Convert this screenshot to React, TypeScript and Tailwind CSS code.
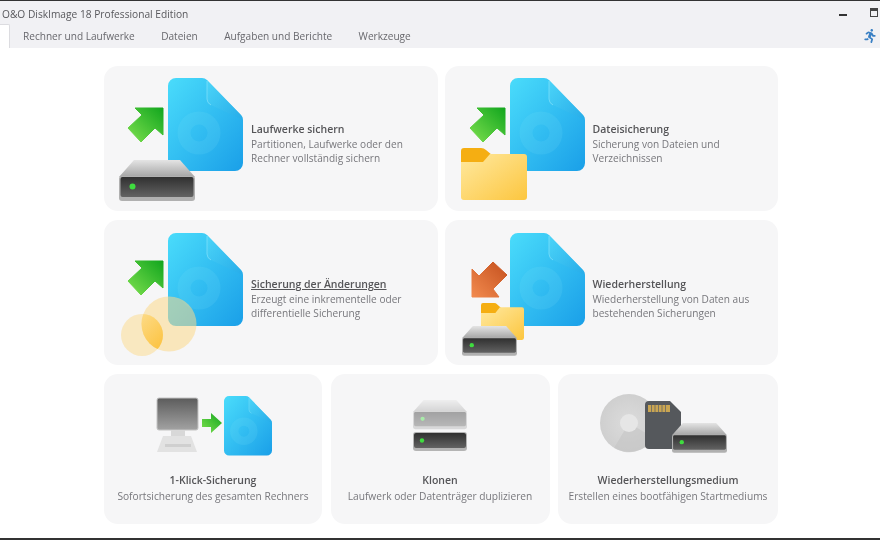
import { FaRunning } from "react-icons/fa";

const FONT = { fontFamily: '"Open Sans", "Noto Sans", sans-serif' };

function Defs() {
  return (
    <svg className="h-0 w-0 block">
      <defs>
        <linearGradient id="fileG" x1="0" y1="0" x2="1" y2="1">
          <stop offset="0" stopColor="#4adcfb" />
          <stop offset="1" stopColor="#1a9fe8" />
        </linearGradient>
        <linearGradient id="foldG" x1="0" y1="0" x2="1" y2="1">
          <stop offset="0" stopColor="#58dcfa" />
          <stop offset="1" stopColor="#26a9e6" />
        </linearGradient>
        <linearGradient id="greenG" x1="0" y1="1" x2="1" y2="0">
          <stop offset="0" stopColor="#7ee04f" />
          <stop offset="1" stopColor="#12a61e" />
        </linearGradient>
        <linearGradient id="orangeG" x1="0" y1="1" x2="1" y2="0">
          <stop offset="0" stopColor="#f28a4e" />
          <stop offset="1" stopColor="#c4501e" />
        </linearGradient>
        <linearGradient id="folderG" x1="0" y1="0" x2="1" y2="1">
          <stop offset="0" stopColor="#ffe9a0" />
          <stop offset="1" stopColor="#fcc63f" />
        </linearGradient>
        <linearGradient id="lensG" x1="0" y1="0" x2="1" y2="1">
          <stop offset="0" stopColor="#fde3a0" />
          <stop offset="1" stopColor="#fcbf35" />
        </linearGradient>
        <linearGradient id="hddTop" x1="0" y1="0" x2="0" y2="1">
          <stop offset="0" stopColor="#e4e4e4" />
          <stop offset="1" stopColor="#a4a4a4" />
        </linearGradient>
        <linearGradient id="hddFront" x1="0" y1="0" x2="0" y2="1">
          <stop offset="0" stopColor="#303030" />
          <stop offset="1" stopColor="#626262" />
        </linearGradient>
        <linearGradient id="monG" x1="0" y1="0" x2="0" y2="1">
          <stop offset="0" stopColor="#5c5c5c" />
          <stop offset="1" stopColor="#a2a2a2" />
        </linearGradient>
        <radialGradient id="cdG" cx="0.5" cy="0.5" r="0.5">
          <stop offset="0" stopColor="#dcdcdc" />
          <stop offset="1" stopColor="#cfcfcf" />
        </radialGradient>
        <clipPath id="bigCircle">
          <circle cx="65" cy="104" r="27.500" />
        </clipPath>
      </defs>
    </svg>
  );
}

function FileDoc({ x, y, s = 1 }: { x: number; y: number; s?: number }) {
  return (
    <g transform={`translate(${x} ${y}) scale(${s})`}>
      <path d="M8 0H34q3 0 5 2L73 37q2 2 2 5V85a8 8 0 0 1-8 8H8a8 8 0 0 1-8-8V8a8 8 0 0 1 8-8Z" fill="url(#fileG)" />
      <path d="M39 2L73 37q2 2 2 5L43 27q-4-2-4-6Z" fill="url(#foldG)" opacity="0.55" />
      <path d="M39 3V21q0 4 4 6" fill="none" stroke="#8fe6fb" strokeWidth="1" opacity="0.6" />
      <circle cx="31" cy="55" r="15" fill="none" stroke="#7fe0f8" strokeOpacity="0.14" strokeWidth="13" />
    </g>
  );
}

function Hdd({ x, y, w = 76, faded = false }: { x: number; y: number; w?: number; faded?: boolean }) {
  const s = w / 76;
  return (
    <g transform={`translate(${x} ${y}) scale(${s})`} opacity={faded ? 0.42 : 1}>
      <path d="M15 0H61L76 17H0Z" fill="url(#hddTop)" />
      <rect x="0" y="16" width="76" height="25" rx="3" fill="#b0b0b0" />
      <rect x="1.500" y="17" width="73" height="20" rx="2" fill="url(#hddFront)" />
      <circle cx="13.500" cy="26.500" r="3" fill="#3fdc3f" />
    </g>
  );
}

function Folder({ x, y, w = 66, h = 52 }: { x: number; y: number; w?: number; h?: number }) {
  const sx = w / 66;
  const sy = h / 52;
  return (
    <g transform={`translate(${x} ${y}) scale(${sx} ${sy})`}>
      <path d="M3 0H20q3 0 5 2l6 5-8 7H0V3q0-3 3-3Z" fill="#f5ae12" />
      <path d="M0 14H22L29 6H63q3 0 3 3V49q0 3-3 3H3q-3 0-3-3Z" fill="url(#folderG)" />
    </g>
  );
}

function GreenArrow({ dx = 0, dy = 0 }: { dx?: number; dy?: number }) {
  return (
    <polygon
      transform={`translate(${dx} ${dy})`}
      points="31,42 59,42 59,69 51,62 37,76 24,62 38,49"
      fill="url(#greenG)"
      stroke="url(#greenG)"
      strokeWidth="1"
      strokeLinejoin="round"
    />
  );
}

function Illustration({ kind }: { kind: string }) {
  return (
    <svg className="h-[145px] w-[147px] shrink-0" viewBox="0 0 147 145">
      {kind === "drive" && (
        <>
          <GreenArrow />
          <FileDoc x={64} y={12} />
          <Hdd x={15} y={94} />
        </>
      )}
      {kind === "files" && (
        <>
          <GreenArrow dx={1} />
          <FileDoc x={65} y={12} />
          <Folder x={16} y={82} />
        </>
      )}
      {kind === "diff" && (
        <>
          <GreenArrow dy={-1} />
          <FileDoc x={64} y={13} />
          <circle cx="65" cy="104" r="27.500" fill="#fbd98a" fillOpacity="0.55" />
          <circle cx="38" cy="115" r="21" fill="#fbd98a" fillOpacity="0.5" />
          <circle cx="38" cy="115" r="21" fill="url(#lensG)" clipPath="url(#bigCircle)" />
        </>
      )}
      {kind === "restore" && (
        <>
          <polygon
            points="27,49 27,77 54,77 48,69 62,55 48,42 34,56"
            fill="url(#orangeG)"
            stroke="url(#orangeG)"
            strokeWidth="1"
            strokeLinejoin="round"
          />
          <FileDoc x={65} y={13} />
          <Folder x={36} y={83} w={43} h={37} />
          <Hdd x={17} y={106} w={55} />
        </>
      )}
    </svg>
  );
}

function WideCard({ kind, title, lines, underline, right, low }: { kind: string; title: string; lines: string[]; underline?: boolean; right?: boolean; low?: boolean }) {
  return (
    <div className="flex flex-1 items-center rounded-[14px] bg-[#f6f6f7]">
      <Illustration kind={kind} />
      <div className={`${low ? "pt-[12px]" : "pt-[10px]"} ${right ? "pl-[1px]" : ""}`}>
        <div className={`text-[10.5px] leading-[16px] font-semibold text-[#555558] ${underline ? "underline" : ""}`}>{title}</div>
        {lines.map((l) => (
          <div key={l} className="text-[10.1px] leading-[14px] text-[#77777c]">
            {l}
          </div>
        ))}
      </div>
    </div>
  );
}

function SmallCard({ width, title, text, children }: { width: string; title: string; text: string; children: React.ReactNode }) {
  return (
    <div className={`${width} flex h-[150px] flex-col items-center rounded-[14px] bg-[#f6f6f7] pt-[20px]`}>
      <svg className="h-[64px] w-[220px]" viewBox="0 0 220 64">
        {children}
      </svg>
      <div className="mt-[15px] text-[10.5px] leading-[15px] font-semibold text-[#555558]">{title}</div>
      <div className="mt-[1px] text-[10.2px] leading-[15px] text-[#77777c]">{text}</div>
    </div>
  );
}

export default function App() {
  return (
    <div className="flex h-[540px] w-[880px] flex-col overflow-hidden border-t-[1.5px] border-b-[2px] border-t-[#333] border-b-[#333] bg-white blur-[0.45px]" style={FONT}>
      <Defs />
      <div className="flex h-[22.5px] items-center justify-between bg-[#f1f1f4] pt-[4px] pr-[2px] pl-[2px]">
        <span className="text-[10.2px] text-[#58585c]">O&amp;O DiskImage 18 Professional Edition</span>
        <div className="flex items-center gap-[23px]">
          <div className="mt-[1px] h-[1.5px] w-[8px] bg-[#333]" />
          <div className="mb-[3px] h-[9px] w-[8px] border border-t-[3px] border-[#444]" />
        </div>
      </div>
      <div className="flex h-[24px] items-center bg-[#f1f1f4]">
        <div className="h-full w-[10px] rounded-tr-[2px] border-t border-r border-[#dcdce0] bg-white" />
        <div className="mt-[3px] ml-[13px] flex gap-[26.4px] text-[10.1px] text-[#68686d]">
          <span>Rechner und Laufwerke</span>
          <span>Dateien</span>
          <span>Aufgaben und Berichte</span>
          <span>Werkzeuge</span>
        </div>
        <FaRunning className="mt-[1px] mr-[3px] ml-auto text-[#3a80c4]" size={14} />
      </div>
      <div className="mt-[18px] ml-[104px] flex w-[674px] flex-col gap-[9px]">
        <div className="flex h-[145px] gap-[7px]">
          <WideCard kind="drive" title="Laufwerke sichern" lines={["Partitionen, Laufwerke oder den", "Rechner vollständig sichern"]} />
          <WideCard kind="files" right title="Dateisicherung" lines={["Sicherung von Dateien und", "Verzeichnissen"]} />
        </div>
        <div className="flex h-[145px] gap-[7px]">
          <WideCard kind="diff" low title="Sicherung der Änderungen" underline lines={["Erzeugt eine inkrementelle oder", "differentielle Sicherung"]} />
          <WideCard kind="restore" low right title="Wiederherstellung" lines={["Wiederherstellung von Daten aus", "bestehenden Sicherungen"]} />
        </div>
        <div className="flex gap-[8.5px]">
          <SmallCard width="w-[218px]" title="1-Klick-Sicherung" text="Sofortsicherung des gesamten Rechners">
            <rect x="54" y="4" width="41" height="32" rx="2" fill="url(#monG)" stroke="#c4c4c4" />
            <rect x="68" y="36" width="14" height="6" fill="#d8d8d8" />
            <path d="M60 42H88L94 58H54Z" fill="#e2e2e2" />
            <rect x="62" y="50" width="26" height="3" fill="#cfcfcf" />
            <polygon points="99,25 108,25 108,19 119,29 108,39 108,33 99,33" fill="url(#greenG)" />
            <FileDoc x={121} y={2} s={0.64} />
          </SmallCard>
          <SmallCard width="w-[219px]" title="Klonen" text="Laufwerk oder Datenträger duplizieren">
            <Hdd x={83} y={6} w={54} faded />
            <rect x="83" y="38" width="54" height="19" rx="3" fill="#b4b4b4" />
            <rect x="84" y="39" width="52" height="15" rx="2" fill="url(#hddFront)" />
            <circle cx="92" cy="46.500" r="2.200" fill="#3fdc3f" />
          </SmallCard>
          <SmallCard width="w-[220px]" title="Wiederherstellungsmedium" text="Erstellen eines bootfähigen Startmediums">
            <circle cx="71" cy="29" r="29" fill="url(#cdG)" />
            <path d="M71 29L96 44A29 29 0 0 1 56 54Z" fill="#c4c4c4" opacity="0.6" />
            <circle cx="71" cy="29" r="9" fill="#e6e6e6" />
            <path d="M91 7H112L123 18V51q0 4-4 4H91q-4 0-4-4V11q0-4 4-4Z" fill="#55585c" />
            <rect x="90" y="11" width="22" height="7" fill="#c9a552" />
            <path d="M93.500 11V18M97 11V18M100.500 11V18M104 11V18M107.500 11V18" stroke="#666" strokeWidth="0.8" />
            <Hdd x={114} y={29} w={55} />
          </SmallCard>
        </div>
      </div>
    </div>
  );
}
